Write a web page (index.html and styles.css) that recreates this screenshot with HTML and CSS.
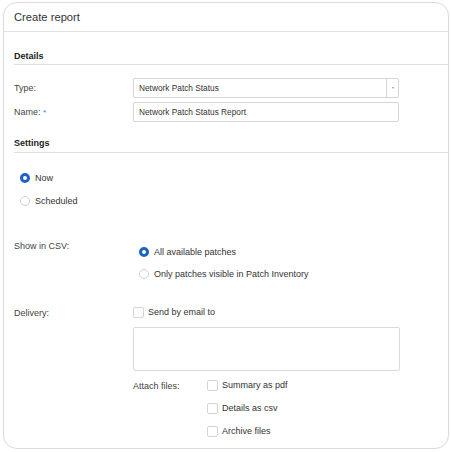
FILE: index.html
```html
<!DOCTYPE html>
<html lang="en">
<head>
<meta charset="utf-8">
<title>Create report</title>
<link rel="stylesheet" href="styles.css">
</head>
<body>
<div class="card">
  <div class="card-header">Create report</div>
  <div class="card-body">
    <div class="section-title details-title">Details</div>
    <div class="rows">
      <div class="field">
        <div class="field-label">Type:</div>
        <div class="select">
          <span class="select-value">Network Patch Status</span>
          <span class="select-btn"><span class="caret"></span></span>
        </div>
      </div>
      <div class="field field-gap">
        <div class="field-label">Name: <span class="req">*</span></div>
        <div class="input">Network Patch Status Report</div>
      </div>
    </div>

    <div class="section-title settings-title">Settings</div>
    <div class="radio-list settings-radios">
      <label class="option"><span class="radio checked"></span>Now</label>
      <label class="option"><span class="radio"></span>Scheduled</label>
    </div>

    <div class="field csv-row">
      <div class="field-label">Show in CSV:</div>
      <div class="radio-list csv-radios">
        <label class="option"><span class="radio checked"></span>All available patches</label>
        <label class="option"><span class="radio"></span>Only patches visible in Patch Inventory</label>
      </div>
    </div>

    <div class="field delivery-row">
      <div class="field-label">Delivery:</div>
      <div class="delivery">
        <label class="option"><span class="check"></span>Send by email to</label>
        <div class="textarea"></div>
        <div class="attach">
          <div class="attach-label">Attach files:</div>
          <div class="check-list">
            <label class="option"><span class="check"></span>Summary as pdf</label>
            <label class="option"><span class="check"></span>Details as csv</label>
            <label class="option"><span class="check"></span>Archive files</label>
          </div>
        </div>
      </div>
    </div>
  </div>
</div>
</body>
</html>
```

FILE: styles.css
```css
* { box-sizing: border-box; }

body {
  margin: 0;
  background: #ffffff;
  font-family: "Liberation Sans", Arial, sans-serif;
  color: #333;
}

.card {
  margin: 2px 0 0 3px;
  width: 446px;
  height: 447px;
  border: 1px solid #dcdcdc;
  border-radius: 14px;
  background: #fff;
  overflow: hidden;
  box-shadow: 0 0 2px rgba(0,0,0,0.05);
}

.card-header {
  height: 29px;
  line-height: 28px;
  padding-left: 10px;
  font-size: 11.2px;
  color: #333;
  border-bottom: 1px solid #e2e2e2;
}

.card-body {
  padding-left: 10px;
}

.section-title {
  font-size: 9px;
  font-weight: bold;
  line-height: 12px;
  color: #222;
  border-bottom: 1px solid #dedede;
}

.details-title {
  margin-top: 18px;
  padding-bottom: 2px;
}

.settings-title {
  margin-top: 14px;
  padding-bottom: 3px;
}

.rows { margin-top: 13px; }

.field {
  display: flex;
  align-items: flex-start;
  font-size: 9px;
}

.field-gap { margin-top: 4px; }

.field-label {
  width: 119px;
  flex: none;
  line-height: 20px;
  color: #444;
}

.req { color: #2a7fd4; font-size: 8px; }

.select {
  display: flex;
  width: 266px;
  height: 20px;
  border: 1px solid #d6d6d6;
  border-radius: 2px;
}

.select-value {
  flex: 1;
  padding-left: 5px;
  line-height: 18px;
  font-size: 8.3px;
  color: #333;
}

.select-btn {
  width: 12px;
  border-left: 1px solid #d6d6d6;
  display: flex;
  align-items: center;
  justify-content: center;
}

.caret {
  width: 0;
  height: 0;
  border-left: 1.5px solid transparent;
  border-right: 1.5px solid transparent;
  border-top: 2px solid #999;
}

.input {
  width: 266px;
  height: 20px;
  border: 1px solid #d6d6d6;
  border-radius: 2px;
  padding-left: 5px;
  line-height: 18px;
  font-size: 8.3px;
  color: #333;
}

.radio-list {
  display: flex;
  flex-direction: column;
  gap: 9px;
}

.settings-radios {
  margin-top: 18px;
  padding-left: 6px;
}

.option {
  display: flex;
  align-items: center;
  font-size: 9px;
  line-height: 14px;
  color: #333;
}

.radio {
  width: 10px;
  height: 10px;
  border-radius: 50%;
  border: 1px solid #d0d0d0;
  margin-right: 5px;
  flex: none;
}

.radio.checked {
  border: 3px solid #1d62c8;
}

.csv-row {
  margin-top: 32px;
}

.csv-row .field-label { line-height: 12px; }

.csv-radios {
  padding-top: 5px;
  padding-left: 6px;
  gap: 8px;
}

.delivery-row { margin-top: 25px; }

.delivery-row .field-label { line-height: 14px; }

.delivery .option { line-height: 12px; }

.check {
  width: 11px;
  height: 11px;
  border: 1px solid #d4d4d4;
  border-radius: 2px;
  margin-right: 4px;
  flex: none;
}

.textarea {
  margin-top: 9px;
  width: 267px;
  height: 44px;
  border: 1px solid #dadada;
  border-radius: 2px;
}

.attach {
  display: flex;
  margin-top: 8px;
}

.attach-label {
  width: 74px;
  flex: none;
  font-size: 9px;
  line-height: 14px;
  color: #444;
}

.check-list {
  display: flex;
  flex-direction: column;
  gap: 11px;
}
```
